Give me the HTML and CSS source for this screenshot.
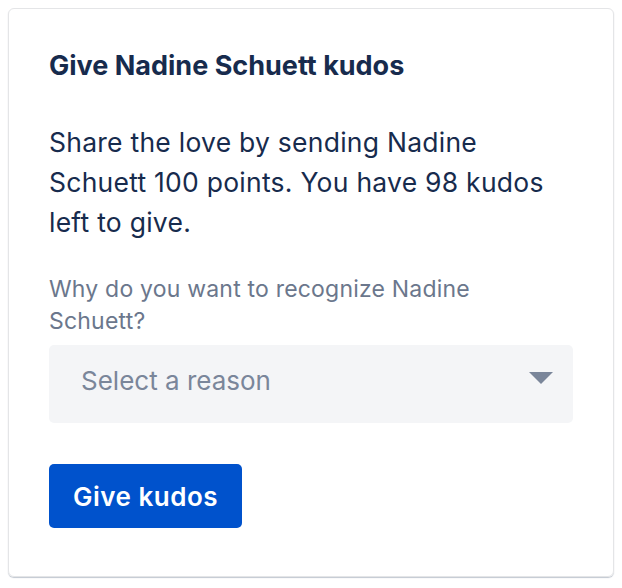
FILE: index.html
```html
<!DOCTYPE html>
<html>
<head>
<meta charset="utf-8">
<link rel="stylesheet" href="styles.css">
</head>
<body>
<div class="card">
  <h2 class="title">Give Nadine Schuett kudos</h2>
  <p class="desc">Share the love by sending Nadine Schuett 100 points. You have 98 kudos left to give.</p>
  <label class="label">Why do you want to recognize Nadine Schuett?</label>
  <div class="select">
    <span class="placeholder">Select a reason</span>
    <svg class="caret" width="24" height="12" viewBox="0 0 24 12"><path d="M0 0 H24 L12 12 Z" fill="#7A869A"/></svg>
  </div>
  <button class="btn">Give kudos</button>
</div>
</body>
</html>
```
FILE: styles.css
```css
html, body { margin: 0; padding: 0; background: #fff; }
body { padding: 8px; font-family: Inter, "Noto Sans", sans-serif; }
.card {
  border: 1px solid #e4e5e7;
  border-radius: 6px;
  box-shadow: 0 1px 1px rgba(9,30,66,0.25);
  padding: 41px 40px 0;
  height: 569px;
  box-sizing: border-box;
}
.title { margin: 0; font-size: 27px; font-weight: 700; color: #172B4D; line-height: 32px; }
.desc { margin: 40px 0 0; font-size: 26.5px; letter-spacing: 0.25px; color: #172B4D; line-height: 40px; }
.label { display: block; max-width: 470px; margin-top: 31px; font-size: 23px; letter-spacing: 0.2px; color: #6B778C; line-height: 32px; }
.select {
  margin-top: 8px;
  height: 78px;
  box-sizing: border-box;
  background: #F4F5F7;
  border-radius: 5px;
  display: flex;
  align-items: center;
  justify-content: space-between;
  padding: 0 20px 8px 32px;
}
.placeholder { font-size: 26px; color: #7A869A; }
.caret { margin-top: -4px; }
.btn {
  display: block;
  margin-top: 41px;
  height: 64px;
  padding: 0 24px;
  background: #0052CC;
  color: #fff;
  border: none;
  border-radius: 5px;
  font-family: Inter, "Noto Sans", sans-serif;
  font-weight: 600;
  font-size: 26px;
  letter-spacing: 0.5px;
}
```
